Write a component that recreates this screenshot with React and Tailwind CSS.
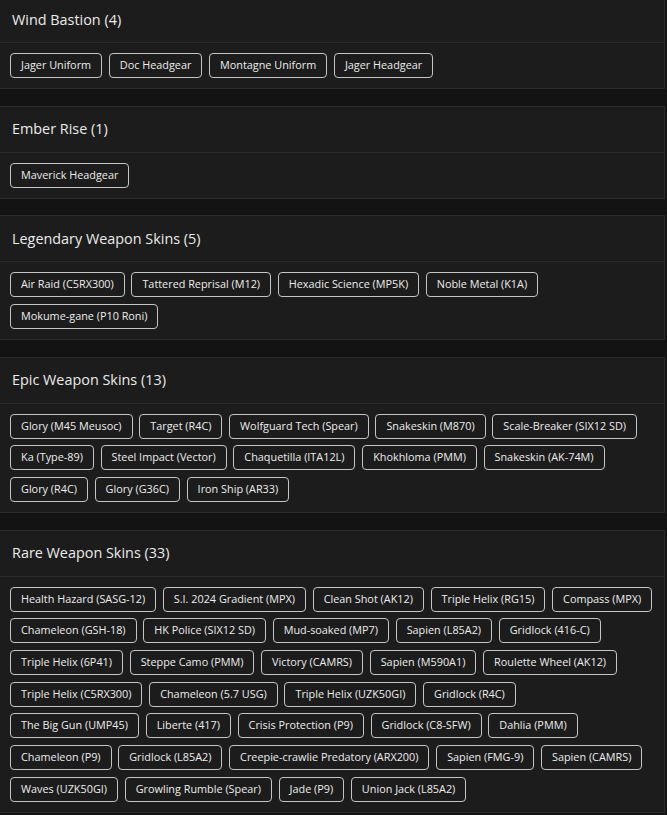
import React from 'react';

// chips are grouped the way they break on the page
const sections = [
  {
    title: 'Wind Bastion',
    rows: [['Jager Uniform', 'Doc Headgear', 'Montagne Uniform', 'Jager Headgear']]
  },
  {
    title: 'Ember Rise',
    rows: [['Maverick Headgear']]
  },
  {
    title: 'Legendary Weapon Skins',
    rows: [
      ['Air Raid (C5RX300)', 'Tattered Reprisal (M12)', 'Hexadic Science (MP5K)', 'Noble Metal (K1A)'],
      ['Mokume-gane (P10 Roni)']
    ]
  },
  {
    title: 'Epic Weapon Skins',
    rows: [
      ['Glory (M45 Meusoc)', 'Target (R4C)', 'Wolfguard Tech (Spear)', 'Snakeskin (M870)', 'Scale-Breaker (SIX12 SD)'],
      ['Ka (Type-89)', 'Steel Impact (Vector)', 'Chaquetilla (ITA12L)', 'Khokhloma (PMM)', 'Snakeskin (AK-74M)'],
      ['Glory (R4C)', 'Glory (G36C)', 'Iron Ship (AR33)']
    ]
  },
  {
    title: 'Rare Weapon Skins',
    rows: [
      ['Health Hazard (SASG-12)', 'S.I. 2024 Gradient (MPX)', 'Clean Shot (AK12)', 'Triple Helix (RG15)', 'Compass (MPX)'],
      ['Chameleon (GSH-18)', 'HK Police (SIX12 SD)', 'Mud-soaked (MP7)', 'Sapien (L85A2)', 'Gridlock (416-C)'],
      ['Triple Helix (6P41)', 'Steppe Camo (PMM)', 'Victory (CAMRS)', 'Sapien (M590A1)', 'Roulette Wheel (AK12)'],
      ['Triple Helix (C5RX300)', 'Chameleon (5.7 USG)', 'Triple Helix (UZK50GI)', 'Gridlock (R4C)'],
      ['The Big Gun (UMP45)', 'Liberte (417)', 'Crisis Protection (P9)', 'Gridlock (C8-SFW)', 'Dahlia (PMM)'],
      ['Chameleon (P9)', 'Gridlock (L85A2)', 'Creepie-crawlie Predatory (ARX200)', 'Sapien (FMG-9)', 'Sapien (CAMRS)'],
      ['Waves (UZK50GI)', 'Growling Rumble (Spear)', 'Jade (P9)', 'Union Jack (L85A2)']
    ]
  }
];

const Chip = ({ label }) => (
  <span className="flex h-[25px] shrink-0 items-center rounded-[4px] border border-[#c4c4c4] px-[10px] text-[10.85px] leading-none text-[#ededed] whitespace-nowrap">
    {label}
  </span>
);

const Section = ({ title, rows }) => {
  const count = rows.reduce((n, r) => n + r.length, 0);
  return (
    <section className="border border-[#2b2b2b] bg-[#1c1c1c]">
      <div className="flex h-[46px] items-center border-b border-[#2b2b2b] px-3 text-[14.4px] text-[#ebebeb]">
        {title} ({count})
      </div>
      <div className="flex flex-col gap-[6.67px] p-[10px]">
        {rows.map((row, i) => (
          <div key={i} className="flex gap-[6.67px]">
            {row.map((item) => (
              <Chip key={item} label={item} />
            ))}
          </div>
        ))}
      </div>
    </section>
  );
};

const App = () => {
  return (
    <div className="min-h-screen overflow-hidden bg-[#131313] font-['Open_Sans',sans-serif]">
      <div className="-ml-px -mt-[4px] flex w-[666px] flex-col gap-[16.67px]">
        {sections.map((s) => (
          <Section key={s.title} title={s.title} rows={s.rows} />
        ))}
      </div>
    </div>
  );
};

export default App;
